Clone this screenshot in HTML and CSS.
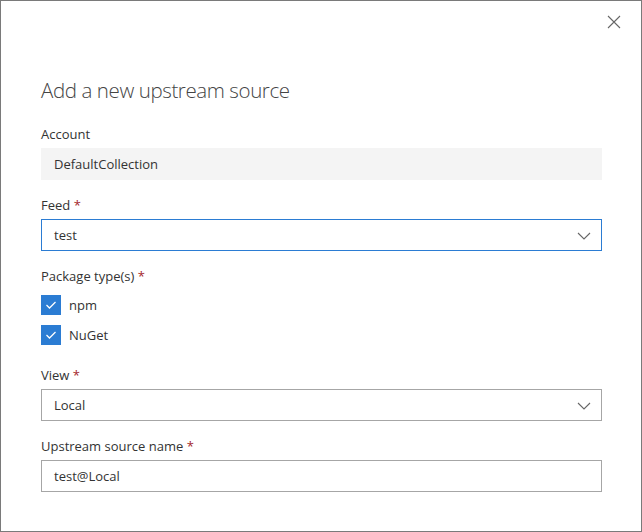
FILE: index.html
```html
<!DOCTYPE html>
<html>
<head>
<meta charset="utf-8">
<link rel="stylesheet" href="styles.css">
</head>
<body>
<div class="dialog">
  <button class="close" aria-label="Close">
    <svg width="14" height="14" viewBox="0 0 14 14"><path d="M1 1L13 13M13 1L1 13" stroke="#666" stroke-width="1.1" fill="none"/></svg>
  </button>
  <h1 class="title">Add a new upstream source</h1>

  <div class="field">
    <div class="label">Account</div>
    <div class="box readonly">DefaultCollection</div>
  </div>

  <div class="field">
    <div class="label">Feed <span class="req">*</span></div>
    <div class="box select focused">test
      <svg class="chev" width="14" height="8" viewBox="0 0 14 8"><path d="M1 1L7 7L13 1" stroke="#666" stroke-width="1.1" fill="none"/></svg>
    </div>
  </div>

  <div class="field">
    <div class="label">Package type(s) <span class="req">*</span></div>
    <div class="checks">
      <label class="check"><span class="cb"><svg width="12" height="10" viewBox="0 0 12 10"><path d="M1.5 5L4.5 8L10.5 2" stroke="#fff" stroke-width="1.3" fill="none"/></svg></span>npm</label>
      <label class="check"><span class="cb"><svg width="12" height="10" viewBox="0 0 12 10"><path d="M1.5 5L4.5 8L10.5 2" stroke="#fff" stroke-width="1.3" fill="none"/></svg></span>NuGet</label>
    </div>
  </div>

  <div class="field view">
    <div class="label">View <span class="req">*</span></div>
    <div class="box select">Local
      <svg class="chev" width="14" height="8" viewBox="0 0 14 8"><path d="M1 1L7 7L13 1" stroke="#666" stroke-width="1.1" fill="none"/></svg>
    </div>
  </div>

  <div class="field">
    <div class="label">Upstream source name <span class="req">*</span></div>
    <div class="box">test@Local</div>
  </div>
</div>
</body>
</html>
```
FILE: styles.css
```css
* { box-sizing: border-box; }
html, body { margin: 0; padding: 0; background: #fff; }
body { font-family: "Open Sans", "Segoe UI", sans-serif; color: #333; }
.dialog {
  position: relative;
  width: 642px;
  height: 532px;
  border: 1px solid #7a7a7a;
  padding: 0 39px 0 40px;
  background: #fff;
}
.close {
  position: absolute;
  top: 14px;
  right: 20px;
  width: 14px;
  height: 14px;
  padding: 0;
  border: 0;
  background: none;
}
.close svg { display: block; }
.title {
  margin: 0;
  padding-top: 74px;
  font-size: 20.5px;
  line-height: 30px;
  font-weight: 300;
  color: #444;
  margin-bottom: 19px;
  letter-spacing: -0.4px;
}
.field { margin-bottom: 15px; }
.label {
  font-size: 13px;
  line-height: 20px;
  margin-bottom: 4px;
  color: #333;
}
.req { color: #a4262c; }
.box {
  position: relative;
  height: 32px;
  border: 1px solid #a6a6a6;
  padding: 0 12px;
  font-size: 13px;
  line-height: 30px;
  color: #333;
}
.box.readonly { background: #f4f4f4; border-color: #f4f4f4; }
.box.focused { border-color: #2b7cd3; }
.chev { position: absolute; right: 10px; top: 12px; }
.checks { display: flex; flex-direction: column; gap: 10px; padding-top: 5px; }
.check { display: flex; align-items: center; gap: 8px; font-size: 13px; line-height: 20px; color: #333; }
.cb {
  width: 20px; height: 20px; background: #2b7cd3;
  display: flex; align-items: center; justify-content: center;
}
.cb svg { display: block; }
.view { padding-top: 5px; }
```
